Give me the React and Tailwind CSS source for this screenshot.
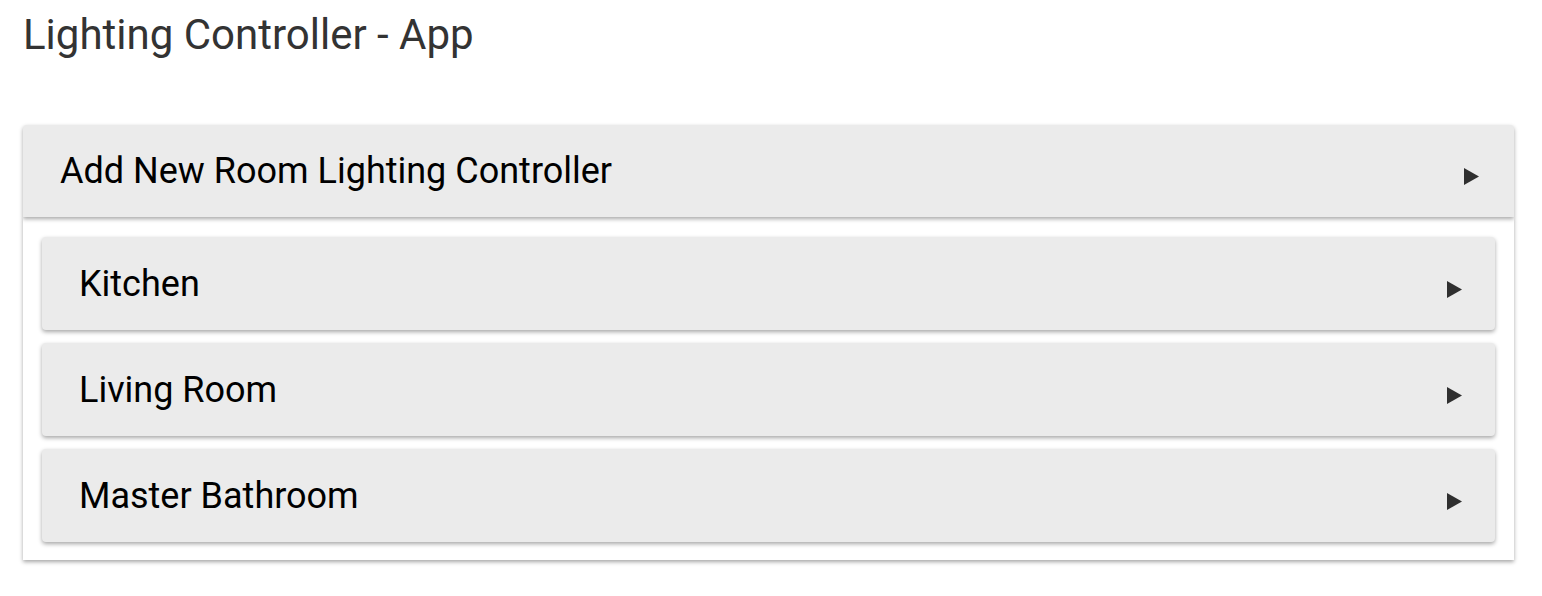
import React from 'react';

const rooms = ['Kitchen', 'Living Room', 'Master Bathroom'];

function Arrow({ className }) {
  return (
    <svg width="17" height="19" viewBox="0 0 17 19" className={`shrink-0 ${className}`}>
      <polygon points="1,1 16,9.5 1,18" fill="#2f2f2f" />
    </svg>
  );
}

export default function App() {
  return (
    <div className="w-[1542px] h-[596px] bg-white overflow-hidden font-['Roboto','Liberation_Sans',sans-serif]">
      <h1 className="pl-[23px] pt-[10px] text-[42px] leading-[50px] text-[#333333] font-normal">
        Lighting Controller - App
      </h1>

      <div className="ml-[23px] mt-[65px] w-[1491px]">
        {/* top-level panel */}
        <div className="h-[92px] flex items-center justify-between pl-[37px] pr-[34px] bg-[#ebebeb] rounded-t-[4px] shadow-[0_2px_4px_rgba(0,0,0,0.35)] relative z-10">
          <span className="text-[36px] text-black">Add New Room Lighting Controller</span>
          <Arrow className="mt-[10px]" />
        </div>

        <div className="bg-white pt-[20px] pb-[18px] px-[19px] flex flex-col gap-[13px] shadow-[0_2px_4px_rgba(0,0,0,0.35)]">
          {rooms.map((room) => (
            <div
              key={room}
              className="h-[93px] flex items-center justify-between pl-[37px] pr-[32px] bg-[#ebebeb] rounded-[4px] shadow-[0_2px_4px_rgba(0,0,0,0.35)]"
            >
              <span className="text-[36px] text-black">{room}</span>
              <Arrow className="mt-[12px]" />
            </div>
          ))}
        </div>
      </div>
    </div>
  );
}
